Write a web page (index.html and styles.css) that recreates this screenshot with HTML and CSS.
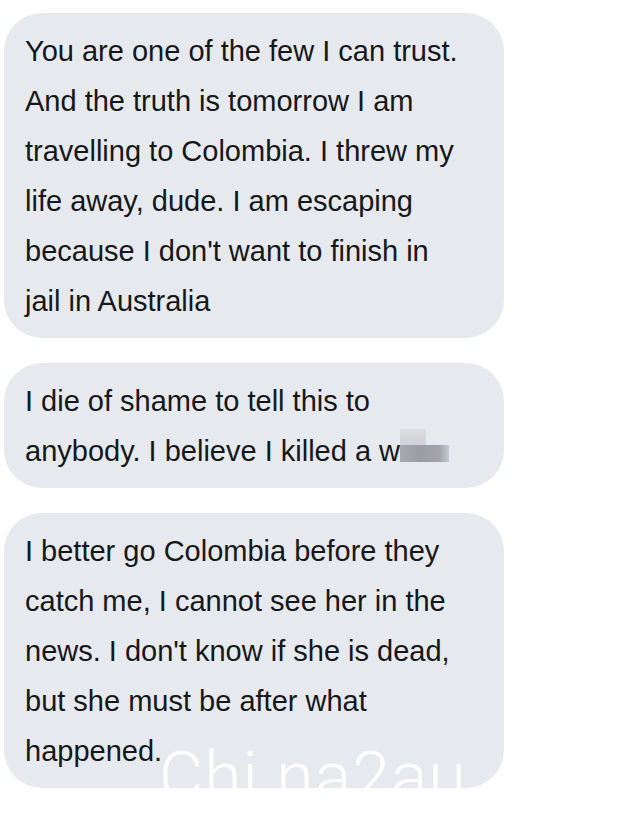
FILE: index.html
```html
<!DOCTYPE html>
<html>
<head>
<meta charset="utf-8">
<link rel="stylesheet" href="styles.css">
</head>
<body>
<div class="thread">
  <div class="bubble">You are one of the few I can trust.<br>And the truth is tomorrow I am<br>travelling to Colombia. I threw my<br>life away, dude. I am escaping<br>because I don't want to finish in<br>jail in Australia</div>
  <div class="bubble">I die of shame to tell this to<br>anybody. I believe I killed a w<span class="blur"></span></div>
  <div class="bubble">I better go Colombia before they<br>catch me, I cannot see her in the<br>news. I don't know if she is dead,<br>but she must be after what<br>happened.</div>
</div>
<div class="watermark">Chi na2au</div>
</body>
</html>
```
FILE: styles.css
```css
html, body {
  margin: 0;
  padding: 0;
  background: #ffffff;
}
body {
  position: relative;
  width: 634px;
  height: 814px;
  overflow: hidden;
}
.thread {
  display: flex;
  flex-direction: column;
  gap: 25px;
  padding: 13px 0 0 4px;
}
.bubble {
  width: 500px;
  box-sizing: border-box;
  background: #e6e9ed;
  border-radius: 38px;
  padding: 13px 12px 12px 21px;
  font-family: "Liberation Sans", Arial, sans-serif;
  font-size: 29px;
  line-height: 50px;
  color: #161719;
  white-space: nowrap;
}
.blur {
  display: inline-block;
  width: 49px;
  height: 17px;
  vertical-align: -1px;
  background: linear-gradient(90deg, #a9a9b1 0%, #9c9ca6 40%, #a3a3ad 80%, #c6c9d0 100%);
  position: relative;
}
.blur::before {
  content: "";
  position: absolute;
  left: 0;
  top: -16px;
  width: 26px;
  height: 16px;
  background: linear-gradient(180deg, #dcdee3 0%, #cfd1d6 100%);
}
.watermark {
  position: absolute;
  left: 159px;
  top: 737px;
  font-family: Roboto, "Liberation Sans", sans-serif;
  font-weight: 300;
  font-size: 68px;
  line-height: 80px;
  color: #ffffff;
  letter-spacing: 1px;
  white-space: pre;
}
```
